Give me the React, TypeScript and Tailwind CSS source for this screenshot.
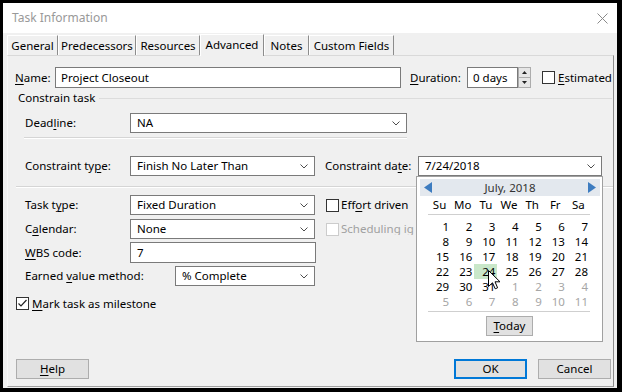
import React from "react";

const U = ({ c }: { c: string }) => (
  <span className="underline decoration-1 underline-offset-[2px]">{c}</span>
);

function Chevron() {
  return (
    <svg width="8" height="5" viewBox="0 0 8 5" className="shrink-0">
      <path d="M0.5 0.5 L4 4 L7.5 0.5" fill="none" stroke="#4d4d4d" strokeWidth="1" />
    </svg>
  );
}

function Combo({ w, children }: { w: string; children: React.ReactNode }) {
  return (
    <div className={`h-[20px] bg-white border border-[#7a7a7a] flex items-center pl-[6px] pr-[6px] ${w}`}>
      <span className="flex-1 whitespace-nowrap">{children}</span>
      <Chevron />
    </div>
  );
}

function Check({ checked, disabled }: { checked?: boolean; disabled?: boolean }) {
  return (
    <div
      className={`w-[13px] h-[13px] shrink-0 bg-white border ${disabled ? "border-[#cccccc]" : "border-[#333333]"} flex items-center justify-center`}
    >
      {checked && (
        <svg width="11" height="11" viewBox="0 0 11 11">
          <path d="M1.5 5.5 L4 8 L9.5 2" fill="none" stroke="#222" strokeWidth="1.2" />
        </svg>
      )}
    </div>
  );
}

function Tab({ label, w, active }: { label: string; w: string; active?: boolean }) {
  return (
    <div
      className={`${w} flex items-center justify-center border-l border-t border-l-white border-t-white border-r border-r-[#8c8c8c] ${
        active ? "h-[22px] bg-[#f0f0f0] relative z-10 -mb-px pb-[1px]" : "h-[20px] bg-[#f0f0f0]"
      }`}
    >
      {label}
    </div>
  );
}

const weeks: [number, boolean][][] = [
  [[1, true], [2, true], [3, true], [4, true], [5, true], [6, true], [7, true]],
  [[8, true], [9, true], [10, true], [11, true], [12, true], [13, true], [14, true]],
  [[15, true], [16, true], [17, true], [18, true], [19, true], [20, true], [21, true]],
  [[22, true], [23, true], [24, true], [25, true], [26, true], [27, true], [28, true]],
  [[29, true], [30, true], [31, true], [1, false], [2, false], [3, false], [4, false]],
  [[5, false], [6, false], [7, false], [8, false], [9, false], [10, false], [11, false]],
];

function CalendarPopup() {
  return (
    <div className="absolute top-[20px] left-[-2px] w-[187px] h-[166px] bg-white border border-[#a0a0a0] z-20 flex flex-col">
      <div className="mt-[2px] ml-[3px] w-[180px] h-[17px] bg-[#e3e8ee] flex items-center justify-between px-[4px]">
        <svg width="8" height="11" viewBox="0 0 8 11">
          <path d="M8 0 L0 5.5 L8 11 Z" fill="#3d7cc0" />
        </svg>
        <span className="text-[#333333]">July, 2018</span>
        <svg width="8" height="11" viewBox="0 0 8 11">
          <path d="M0 0 L8 5.5 L0 11 Z" fill="#3d7cc0" />
        </svg>
      </div>
      <div className="ml-[11px] w-[162px]">
        <div className="mt-[2px] h-[14px] grid grid-cols-7 items-center">
          {["Su", "Mo", "Tu", "We", "Th", "Fr", "Sa"].map((d) => (
            <div key={d} className="text-center">
              {d}
            </div>
          ))}
        </div>
        <div className="mt-[2px] h-px bg-[#cfcfcf]" />
        <div className="mt-[4px] flex flex-col">
          {weeks.map((wk, i) => (
            <div key={i} className="h-[15px] grid grid-cols-7">
              {wk.map(([n, cur], j) => (
                <div
                  key={j}
                  className={`flex items-center justify-end pr-[2px] ${cur ? "text-black" : "text-[#a6a6a6]"} ${
                    i === 3 && j === 2 ? "bg-[#c9e7c9]" : ""
                  }`}
                >
                  {n}
                </div>
              ))}
            </div>
          ))}
        </div>
        <div className="mt-[2px] h-px bg-[#cfcfcf]" />
      </div>
      <div className="mt-[4px] mx-auto w-[47px] h-[20px] bg-[#e1e1e1] border border-[#adadad] flex items-center justify-center">
        <span>
          <U c="T" />
          oday
        </span>
      </div>
      <svg className="absolute left-[71px] top-[93px]" width="13" height="20" viewBox="0 0 13 20">
        <path
          d="M0.5 0.5 L0.5 16.5 L4.5 12.8 L7.2 18.8 L9.6 17.8 L7 11.8 L12 11.8 Z"
          fill="white"
          stroke="black"
          strokeWidth="1"
          strokeLinejoin="miter"
        />
      </svg>
    </div>
  );
}

export default function App() {
  return (
    <div className="w-[622px] h-[392px] bg-black pt-[3px] pl-[3px] pr-[5px] pb-[4px] font-['Noto_Sans',sans-serif] text-[11.5px] leading-none text-black">
      <div className="w-full h-full bg-[#f0f0f0] flex flex-col">
        {/* Title bar */}
        <div className="h-[30px] bg-white flex items-center justify-between pl-[9px] pr-[9px] shrink-0">
          <span className="text-[12px] text-[#999999]">Task Information</span>
          <svg width="11" height="11" viewBox="0 0 11 11">
            <path d="M0.5 0.5 L10.5 10.5 M10.5 0.5 L0.5 10.5" stroke="#8a8a8a" strokeWidth="1" />
          </svg>
        </div>
        {/* Tabs */}
        <div className="h-[22px] flex items-end pl-[4px] shrink-0">
          <Tab label="General" w="w-[51px]" />
          <Tab label="Predecessors" w="w-[78px]" />
          <Tab label="Resources" w="w-[64px]" />
          <Tab label="Advanced" w="w-[64px]" active />
          <Tab label="Notes" w="w-[45px]" />
          <Tab label="Custom Fields" w="w-[85px]" />
        </div>
        {/* Panel */}
        <div className="flex-1 ml-[4px] mr-[3px] mb-[1px] border border-t-[#d9d9d9] border-l-[#f8f8f8] border-r-[#8c8c8c] border-b-[#a0a0a0] flex flex-col">
          {/* Name row */}
          <div className="mt-[11px] h-[21px] flex items-center pl-[7px]">
            <div className="w-[40px]">
              <U c="N" />
              ame:
            </div>
            <div className="w-[346px] h-[21px] bg-white border border-[#7a7a7a] flex items-center pl-[5px]">
              Project Closeout
            </div>
            <div className="ml-[9px] w-[57px]">
              <U c="D" />
              uration:
            </div>
            <div className="w-[51px] h-[21px] bg-white border border-[#7a7a7a] flex items-center pl-[5px]">0 days</div>
            <div className="w-[13px] h-[21px] flex flex-col">
              <div className="flex-1 bg-[#e6e6e6] border border-[#acacac] flex items-center justify-center">
                <svg width="5" height="3" viewBox="0 0 5 3">
                  <path d="M0 3 L2.5 0 L5 3 Z" fill="#222" />
                </svg>
              </div>
              <div className="flex-1 bg-[#e6e6e6] border border-t-0 border-[#acacac] flex items-center justify-center">
                <svg width="5" height="3" viewBox="0 0 5 3">
                  <path d="M0 0 L2.5 3 L5 0 Z" fill="#222" />
                </svg>
              </div>
            </div>
            <div className="ml-[11px]">
              <Check />
            </div>
            <div className="ml-[3px]">
              <U c="E" />
              stimated
            </div>
          </div>
          {/* Group header */}
          <div className="mt-[3px] h-[14px] flex items-center pl-[10px]">
            <span>Constrain task</span>
            <div className="flex-1 h-px bg-[#dcdcdc] ml-[4px] mr-[1px]" />
          </div>
          {/* Deadline */}
          <div className="mt-[8px] h-[20px] flex items-center pl-[17px]">
            <div className="w-[105px]">
              Dead
              <U c="l" />
              ine:
            </div>
            <Combo w="w-[277px]">NA</Combo>
          </div>
          <div className="mt-[4px] ml-[16px] w-[383px] h-[2px] border-t border-t-[#d5d5d5] border-b border-b-white" />
          {/* Constraint type */}
          <div className="mt-[17px] h-[20px] flex items-center pl-[17px]">
            <div className="w-[105px]">
              Constraint ty
              <U c="p" />
              e:
            </div>
            <Combo w="w-[185px]">Finish No Later Than</Combo>
            <div className="ml-[10px] w-[93px]">
              Constraint da
              <U c="t" />
              e:
            </div>
            <div className="relative">
              <Combo w="w-[184px]">7/24/2018</Combo>
              <CalendarPopup />
            </div>
          </div>
          <div className="mt-[10px] ml-[8px] h-[2px] border-t border-t-[#d5d5d5] border-b border-b-white" />
          {/* Task type */}
          <div className="mt-[7px] h-[20px] flex items-center pl-[17px]">
            <div className="w-[105px]">
              Task t
              <U c="y" />
              pe:
            </div>
            <Combo w="w-[185px]">Fixed Duration</Combo>
            <div className="ml-[11px]">
              <Check />
            </div>
            <div className="ml-[2px]">
              Eff
              <U c="o" />
              rt driven
            </div>
          </div>
          {/* Calendar */}
          <div className="mt-[4px] h-[20px] flex items-center pl-[17px]">
            <div className="w-[105px]">
              C
              <U c="a" />
              lendar:
            </div>
            <Combo w="w-[185px]">None</Combo>
            <div className="ml-[11px]">
              <Check disabled />
            </div>
            <div className="ml-[2px] w-[73px] overflow-hidden text-[#a0a0a0] whitespace-nowrap">
              Scheduling i<U c="g" />n
            </div>
          </div>
          {/* WBS */}
          <div className="mt-[3px] h-[21px] flex items-center pl-[17px]">
            <div className="w-[105px]">
              <U c="W" />
              BS code:
            </div>
            <div className="w-[186px] h-[21px] bg-white border border-[#7a7a7a] flex items-center pl-[6px]">7</div>
          </div>
          {/* Earned value */}
          <div className="mt-[3px] h-[20px] flex items-center pl-[17px]">
            <div className="w-[150px]">
              Earned <U c="v" />
              alue method:
            </div>
            <Combo w="w-[140px]">% Complete</Combo>
          </div>
          {/* Milestone */}
          <div className="mt-[11px] h-[13px] flex items-center pl-[8px]">
            <Check checked />
            <div className="ml-[3px]">
              <U c="M" />
              ark task as milestone
            </div>
          </div>
          {/* Buttons */}
          <div className="mt-auto mb-[7px] flex items-center pl-[8px] pr-[2px]">
            <div className="w-[73px] h-[20px] bg-[#e1e1e1] border border-[#adadad] flex items-center justify-center">
              <span>
                <U c="H" />
                elp
              </span>
            </div>
            <div className="flex-1" />
            <div className="w-[73px] h-[20px] bg-[#e1e1e1] border-2 border-[#0078d7] flex items-center justify-center">
              OK
            </div>
            <div className="ml-[11px] w-[73px] h-[20px] bg-[#e1e1e1] border border-[#adadad] flex items-center justify-center">
              Cancel
            </div>
          </div>
        </div>
      </div>
    </div>
  );
}
